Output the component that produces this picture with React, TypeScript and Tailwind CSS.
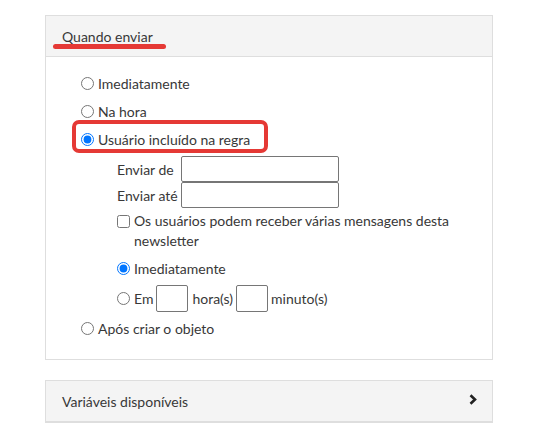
const Radio = ({ checked = false }: { checked?: boolean }) => (
    <input type="radio" readOnly checked={checked} className="m-0 w-[13px] h-[13px] shrink-0" />
)

const Box = ({ w }: { w: string }) => (
    <span className={`block h-[26px] ${w} border border-[#767676] rounded-[2px] bg-white`} />
)

const App = () => {
    return (
        <div
            className="min-h-screen bg-white pt-[15px] pl-[45px] text-[14px] text-[#383838]"
            style={{ fontFamily: "Lato, 'Open Sans', sans-serif" }}
        >
            <div className="w-[448px] border border-[#dedede]">
                <div className="relative h-[41px] bg-[#f4f4f4] border-b border-[#dedede] flex items-center pl-4">
                    <span className="text-[14px]">Quando enviar</span>
                    <span className="absolute left-[7px] top-[28px] h-[5px] w-[113px] rounded-full bg-[#e53935]" />
                </div>

                <div className="pl-[35px] pr-5 pt-3 pb-[17px]">
                    <label className="h-[28px] flex items-center gap-1">
                        <Radio />
                        <span>Imediatamente</span>
                    </label>
                    <label className="h-[28px] flex items-center gap-1">
                        <Radio />
                        <span>Na hora</span>
                    </label>
                    <div className="h-[28px] flex items-center">
                        <label className="relative flex items-center gap-1">
                            <Radio checked />
                            <span>Usuário incluído na regra</span>
                            <span className="absolute -left-[9px] -top-[9px] w-[196px] h-[33px] border-4 border-[#e53935] rounded-[7px]" />
                        </label>
                    </div>

                    <div className="pl-[36px] mt-[3px]">
                        <div className="h-[26px] flex items-center">
                            <span className="w-[64px]">Enviar de</span>
                            <Box w="w-[158px]" />
                        </div>
                        <div className="h-[26px] flex items-center">
                            <span className="w-[64px]">Enviar até</span>
                            <Box w="w-[158px]" />
                        </div>

                        <label className="mt-[3px] flex items-start gap-1 leading-[20px]">
                            <input type="checkbox" readOnly className="m-0 mt-[4px] w-[13px] h-[13px] shrink-0" />
                            <span>Os usuários podem receber várias mensagens desta newsletter</span>
                        </label>

                        <label className="mt-[3px] h-[28px] flex items-center gap-1">
                            <Radio checked />
                            <span>Imediatamente</span>
                        </label>
                        <div className="mt-[2px] h-[28px] flex items-center">
                            <Radio />
                            <span className="ml-1">Em</span>
                            <span className="ml-[3px] block h-[27px] w-[32px] border border-[#767676] rounded-[2px]" />
                            <span className="ml-[4px]">hora(s)</span>
                            <span className="ml-[3px] block h-[27px] w-[32px] border border-[#767676] rounded-[2px]" />
                            <span className="ml-[3px]">minuto(s)</span>
                        </div>
                    </div>

                    <label className="mt-[2px] h-[28px] flex items-center gap-1">
                        <Radio />
                        <span>Após criar o objeto</span>
                    </label>
                </div>
            </div>

            <div className="mt-5 w-[448px] h-[43px] bg-[#f4f4f4] border border-[#dedede] border-b-2 flex items-center justify-between pl-4 pr-[15px]">
                <span>Variáveis disponíveis</span>
                <svg width="8" height="11" viewBox="0 0 8 11" className="mb-[3px]">
                    <path d="M1.5 1.2 L6 5.5 L1.5 9.8" fill="none" stroke="#222" strokeWidth="2.6" />
                </svg>
            </div>
        </div>
    )
}

export default App;
